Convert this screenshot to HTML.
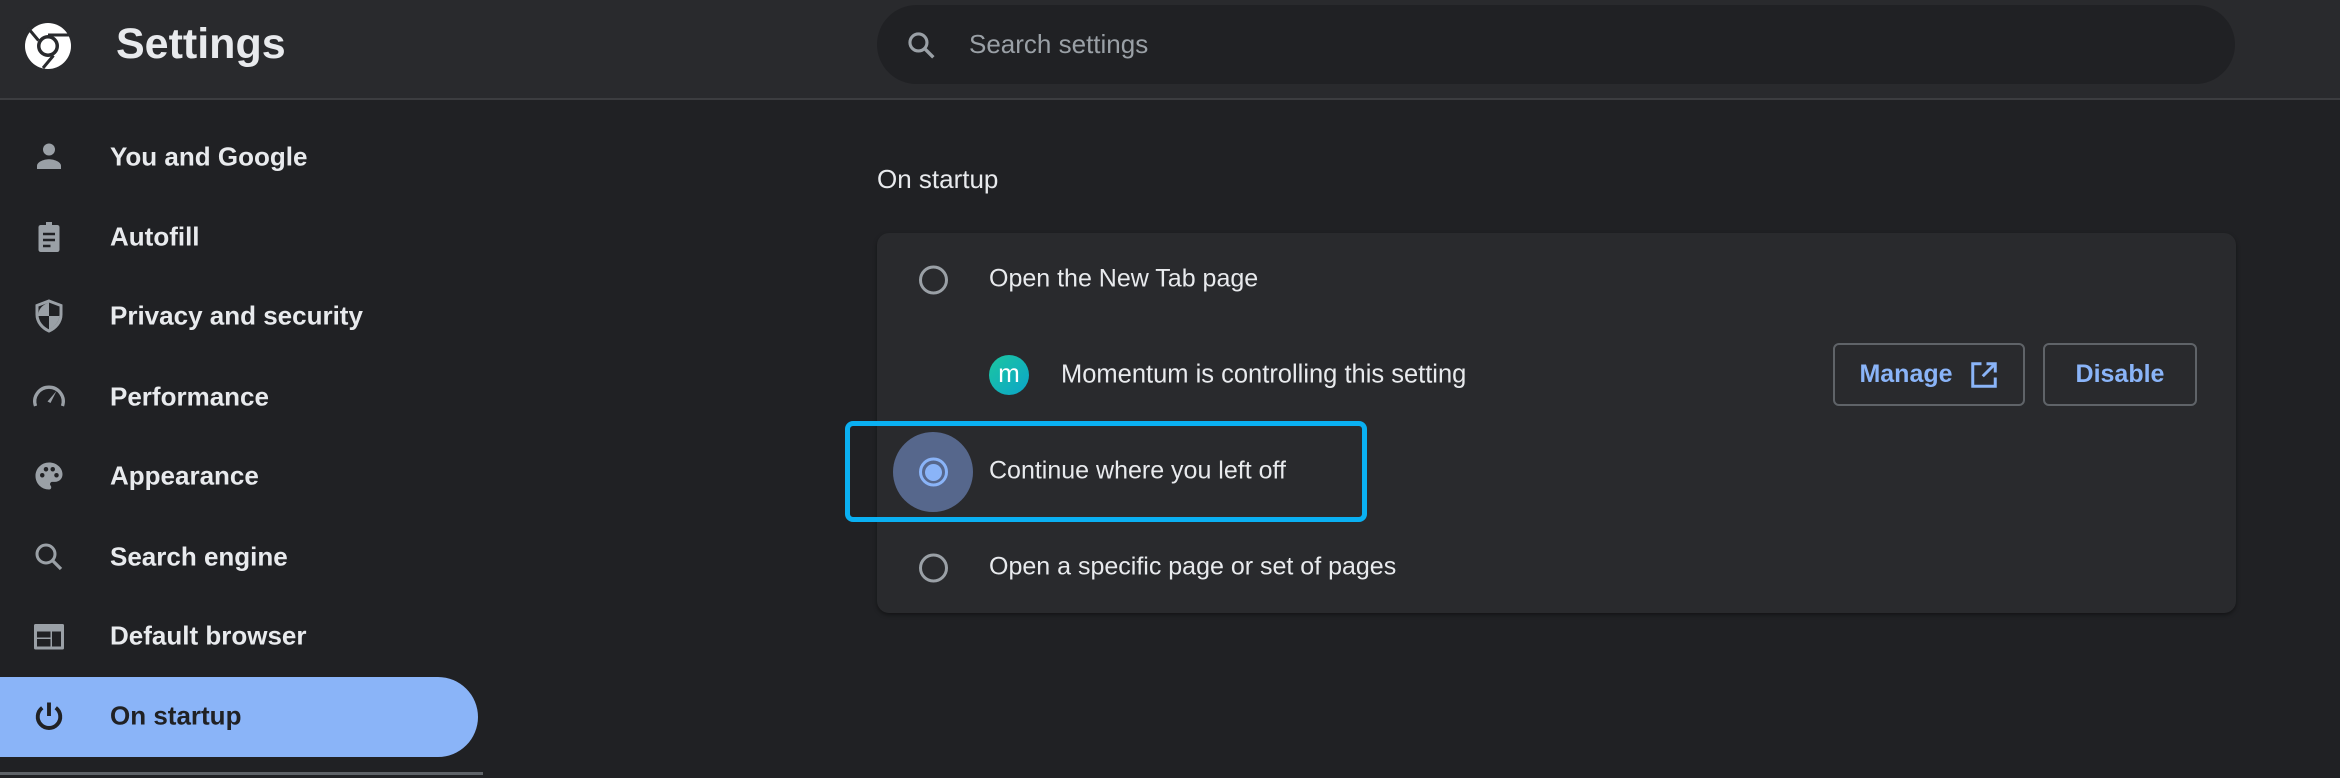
<!DOCTYPE html>
<html><head><style>
*{margin:0;padding:0;box-sizing:border-box}
body{width:2340px;height:778px;background:#202124;font-family:"Liberation Sans",sans-serif;position:relative;overflow:hidden;color:#e8eaed}
.hdr{position:absolute;left:0;top:0;width:2340px;height:100px;background:#292a2d;border-bottom:2px solid #3c3d40}
.abs{position:absolute}
.nav{position:absolute;left:110px;font-size:26px;font-weight:bold;color:#e8eaed;transform:translateY(-50%)}
.ico{position:absolute;left:31px;width:36px;height:36px;transform:translateY(-50%)}
.rad{position:absolute;left:919px;width:29px;height:29px;border:3px solid #9aa0a6;border-radius:50%;transform:translateY(-50%)}
.opt{position:absolute;left:989px;font-size:25px;color:#e8eaed;transform:translateY(-50%)}
.btn{position:absolute;top:343px;height:63px;border:2px solid #5f6368;border-radius:6px;color:#8ab4f8;font-weight:bold;font-size:25px;display:flex;align-items:center;justify-content:center}
</style></head><body>
<div class="hdr"></div>
<svg class="abs" style="left:24px;top:22px" width="48" height="48" viewBox="0 0 48 48">
<circle cx="24" cy="24" r="23" fill="#fff"/>
<circle cx="24" cy="24" r="11" fill="#292a2d"/>
<circle cx="24" cy="24" r="7.5" fill="#fff"/>
<path d="M24 13 L45 13" stroke="#292a2d" stroke-width="3"/>
<path d="M14.5 18.5 L4 6" stroke="#292a2d" stroke-width="3"/>
<path d="M29.5 33.5 L19 46" stroke="#292a2d" stroke-width="3"/>
</svg>
<div class="abs" style="left:116px;top:20px;font-size:43px;font-weight:bold;color:#e8eaed">Settings</div>
<div class="abs" style="left:877px;top:5px;width:1358px;height:79px;border-radius:40px;background:#202124"></div>
<svg class="abs" style="left:905px;top:29px" width="34" height="34" viewBox="0 0 24 24"><circle cx="9.5" cy="9.5" r="6" fill="none" stroke="#9aa0a6" stroke-width="2.2"/><path d="M14 14 L20 20" stroke="#9aa0a6" stroke-width="2.4"/></svg>
<div class="abs" style="left:969px;top:29px;font-size:26px;color:#9aa0a6">Search settings</div>

<!-- sidebar -->
<div class="abs" style="left:0;top:677px;width:478px;height:80px;background:#8ab4f8;border-radius:0 40px 40px 0"></div>
<div class="abs" style="left:0;top:772px;width:483px;height:3px;background:#5f6368"></div>

<svg class="ico" style="top:157px" viewBox="0 0 24 24"><circle cx="12" cy="7" r="4" fill="#9aa0a6"/><path d="M4 20v-2c0-3 5-4.5 8-4.5s8 1.5 8 4.5v2z" fill="#9aa0a6"/></svg>
<div class="nav" style="top:157px">You and Google</div>
<svg class="ico" style="top:237px" viewBox="0 0 24 24"><rect x="5" y="4" width="14" height="18" rx="1.5" fill="#9aa0a6"/><rect x="10" y="2" width="4" height="3" fill="#9aa0a6"/><path d="M8 10h8M8 14h8M8 18h5" stroke="#202124" stroke-width="1.6"/></svg>
<div class="nav" style="top:237px">Autofill</div>
<svg class="ico" style="top:316px" viewBox="0 0 24 24"><path d="M12 2 L20 5 V11 C20 16 16.5 20 12 22 C7.5 20 4 16 4 11 V5Z" fill="none" stroke="#9aa0a6" stroke-width="2"/><path d="M12 3 V12 H5 V11 C5 5 12 3 12 3Z M12 12 H19 C18.5 16 15.5 19.5 12 21Z" fill="#9aa0a6"/></svg>
<div class="nav" style="top:316px">Privacy and security</div>
<svg class="ico" style="top:397px" viewBox="0 0 24 24"><path d="M3 18 A9.5 9.5 0 1 1 21 18" fill="none" stroke="#9aa0a6" stroke-width="2.2"/><path d="M11 15 L17 8 L13 16Z" fill="#9aa0a6"/></svg>
<div class="nav" style="top:397px">Performance</div>
<svg class="ico" style="top:476px" viewBox="0 0 24 24"><path d="M12 3C7 3 3 7 3 12s4 9 9 9c1 0 1.5-.7 1.5-1.5 0-.5-.2-.8-.4-1.1-.3-.3-.4-.6-.4-1 0-.8.7-1.5 1.5-1.5H16c2.8 0 5-2.2 5-5C21 6.5 17 3 12 3z" fill="#9aa0a6"/><circle cx="7.5" cy="11.5" r="1.5" fill="#202124"/><circle cx="10" cy="7.5" r="1.5" fill="#202124"/><circle cx="14.5" cy="7.5" r="1.5" fill="#202124"/><circle cx="17" cy="11.5" r="1.5" fill="#202124"/></svg>
<div class="nav" style="top:476px">Appearance</div>
<svg class="ico" style="top:557px" viewBox="0 0 24 24"><circle cx="10" cy="10" r="6" fill="none" stroke="#9aa0a6" stroke-width="2"/><path d="M14.5 14.5 L20 20" stroke="#9aa0a6" stroke-width="2.2"/></svg>
<div class="nav" style="top:557px">Search engine</div>
<svg class="ico" style="top:636px" viewBox="0 0 24 24"><rect x="2" y="4" width="20" height="17" rx="1" fill="#9aa0a6"/><rect x="4" y="9" width="9" height="4" fill="#202124"/><rect x="4" y="14" width="9" height="5" fill="#202124"/><rect x="14" y="9" width="6" height="10" fill="#202124"/></svg>
<div class="nav" style="top:636px">Default browser</div>
<svg class="ico" style="top:716px" viewBox="0 0 24 24"><path d="M7.5 6.5 A7.5 7.5 0 1 0 16.5 6.5" fill="none" stroke="#202124" stroke-width="2.6"/><path d="M12 3 V12" stroke="#202124" stroke-width="2.6"/></svg>
<div class="nav" style="top:716px;color:#202124">On startup</div>

<!-- main -->
<div class="abs" style="left:877px;top:164px;font-size:26px;color:#e8eaed">On startup</div>
<div class="abs" style="left:877px;top:233px;width:1359px;height:380px;background:#292a2d;border-radius:12px;box-shadow:0 2px 4px rgba(0,0,0,.4)"></div>

<div class="rad" style="top:280px"></div>
<div class="opt" style="top:279px">Open the New Tab page</div>

<div class="abs" style="left:989px;top:355px;width:40px;height:40px;border-radius:50%;background:linear-gradient(135deg,#1cc7a0,#0ba4c9);color:#fff;font-size:26px;text-align:center;line-height:36px">m</div>
<div class="opt" style="left:1061px;top:375px;font-size:25.5px">Momentum is controlling this setting</div>
<div class="btn" style="left:1833px;width:192px">Manage<svg style="margin-left:16px" width="30" height="30" viewBox="0 0 24 24"><path d="M10 3H3V21H21V14" fill="none" stroke="#8ab4f8" stroke-width="2.4"/><path d="M14 3H21V10M21 3L11 13" fill="none" stroke="#8ab4f8" stroke-width="2.4"/></svg></div>
<div class="btn" style="left:2043px;width:154px">Disable</div>

<div class="abs" style="left:893px;top:432px;width:80px;height:80px;border-radius:50%;background:#56678c"></div>
<div class="rad" style="top:472px;border-color:#8ab4f8"></div>
<div class="abs" style="left:925px;top:464px;width:17px;height:17px;border-radius:50%;background:#8ab4f8"></div>
<div class="opt" style="top:471px">Continue where you left off</div>
<div class="abs" style="left:845px;top:421px;width:522px;height:101px;border:5px solid #0ab0f2;border-radius:8px"></div>

<div class="rad" style="top:568px"></div>
<div class="opt" style="top:567px">Open a specific page or set of pages</div>
</body></html>
